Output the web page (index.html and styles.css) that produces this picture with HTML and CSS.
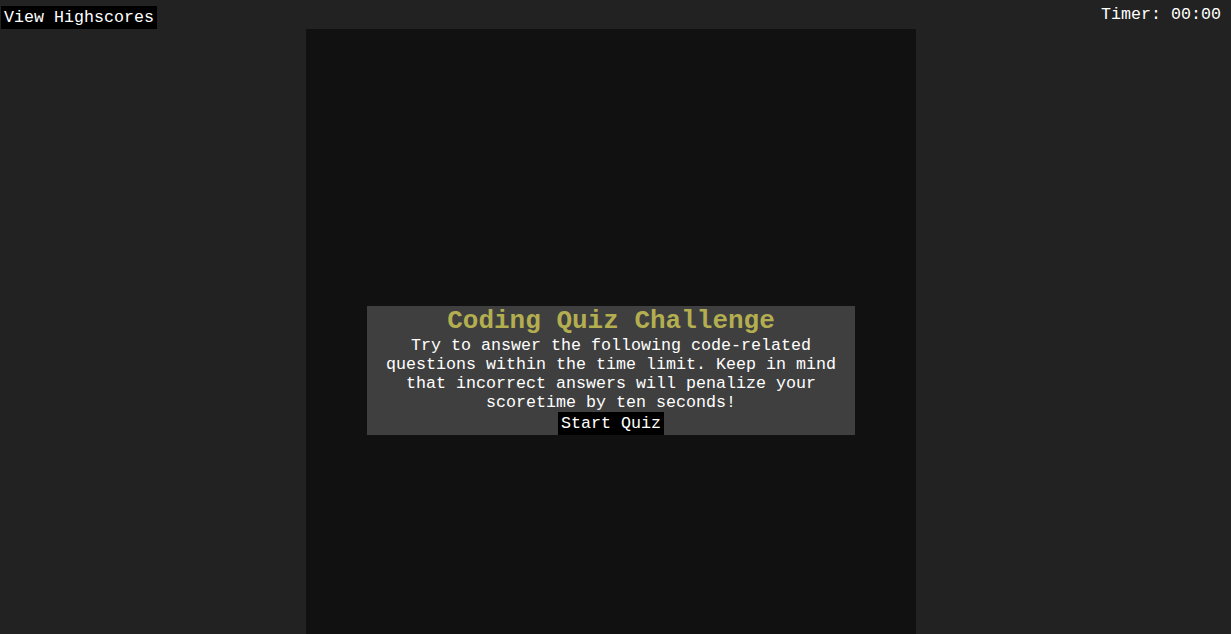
FILE: index.html
```html
<!DOCTYPE html>
<html lang="en">
<head>
<meta charset="utf-8">
<title>Coding Quiz</title>
<link rel="stylesheet" href="styles.css">
</head>
<body>
<div class="page">
  <header class="topbar">
    <button class="link-btn">View Highscores</button>
    <span class="timer">Timer: 00:00</span>
  </header>
  <main class="stage">
    <section class="card">
      <h1 class="title">Coding Quiz Challenge</h1>
      <p class="intro">Try to answer the following code-related questions within the time limit. Keep in mind that incorrect answers will penalize your scoretime by ten seconds!</p>
      <button class="start-btn">Start Quiz</button>
    </section>
  </main>
</div>
</body>
</html>
```
FILE: styles.css
```css
html, body {
  margin: 0;
  padding: 0;
  background: #222222;
  height: 100%;
  overflow: hidden;
}
body {
  font-family: "Courier New", "Nimbus Mono PS", "FreeMono", "Liberation Mono", monospace;
  font-size: 16.667px;
  color: #ffffff;
}
.page {
  padding: 0 10px 0 1px;
}
.topbar {
  height: 29px;
  display: flex;
  justify-content: space-between;
  align-items: flex-end;
}
.link-btn,
.start-btn {
  font-family: inherit;
  font-size: 16.667px;
  line-height: 19px;
  color: #ffffff;
  background: #000000;
  border: 0;
  border-radius: 0;
  padding: 2px 3px;
  margin: 0;
  cursor: pointer;
}
.link-btn {
  height: 23px;
}
.timer {
  line-height: 19px;
  padding-bottom: 5px;
}
.stage {
  margin-left: 25%;
  width: 50%;
  background: #111111;
  height: calc(100vh - 29px);
  padding-top: 277px;
  box-sizing: border-box;
}
.card {
  width: 80%;
  margin: 0 auto;
  background: #3f3f3f;
  display: flex;
  flex-direction: column;
  align-items: center;
  text-align: center;
}
.title {
  margin: 0;
  font-size: 26px;
  line-height: 30px;
  font-weight: bold;
  color: #b3ae50;
}
.intro {
  margin: 0;
  line-height: 19px;
}
.start-btn {
  height: 23px;
}
```
